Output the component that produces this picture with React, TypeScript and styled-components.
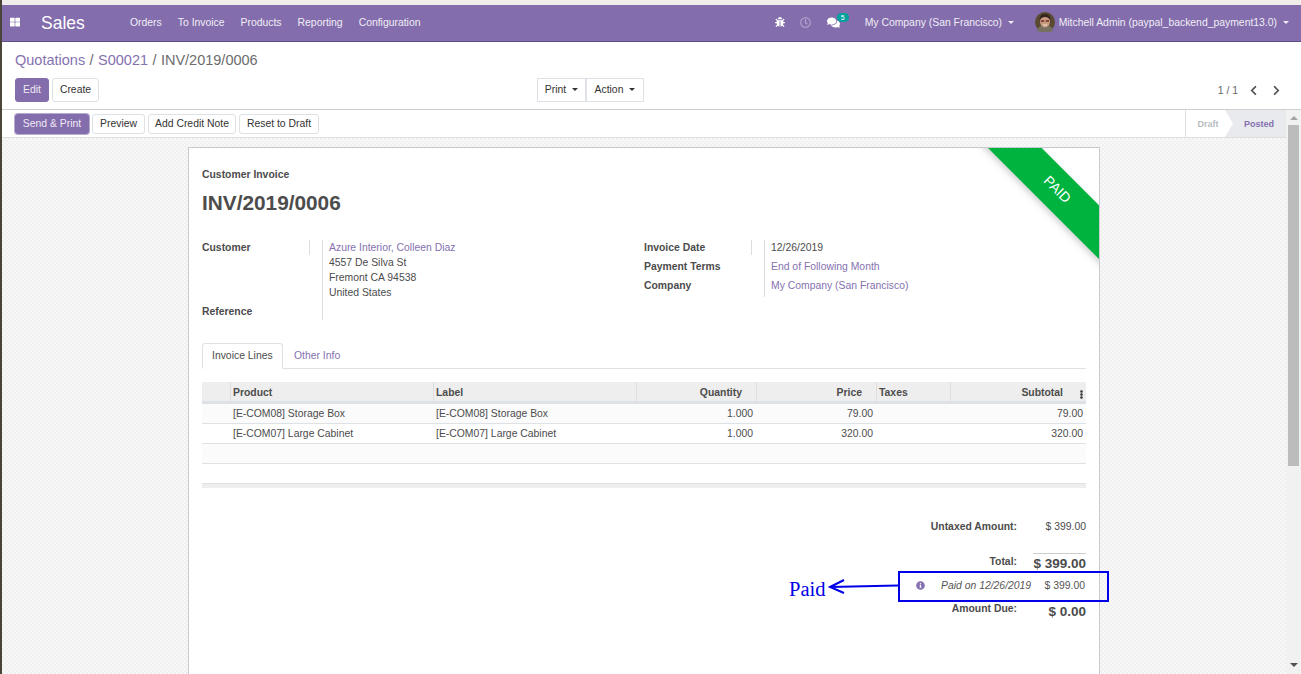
import React from 'react'
import styled, { createGlobalStyle } from 'styled-components'
import {
  FaBug,
  FaChevronLeft,
  FaChevronRight,
  FaComments,
  FaEllipsisV,
  FaInfoCircle,
  FaRegClock,
  FaThLarge,
} from 'react-icons/fa'

const GlobalStyle = createGlobalStyle`
  html, body {
    margin: 0;
    height: 100%;
    overflow: hidden;
  }
  body {
    font-family: "Liberation Sans", Arial, sans-serif;
    font-size: 10.4px;
    color: #4c4c4c;
  }
`

const PURPLE = '#836dac'
const LINK = '#8571b0'

const Page = styled.div`
  position: relative;
  width: 1301px;
  height: 674px;
  overflow: hidden;
  display: flex;
  flex-direction: column;
  background: #fff;
  border-left: 2px solid #4b4438;
  box-sizing: border-box;
`

const TopStrip = styled.div`
  height: 5px;
  flex: none;
  background: #efeeea;
`

const Navbar = styled.nav`
  height: 37px;
  flex: none;
  box-sizing: border-box;
  display: flex;
  align-items: center;
  background: ${PURPLE};
  border-bottom: 1px solid #5f4d88;
  color: #fff;
`

const AppsIcon = styled.span`
  display: flex;
  margin-left: 8px;
  margin-bottom: 2px;
  font-size: 10px;
`

const Brand = styled.span`
  margin-left: 21px;
  padding-top: 1px;
  font-size: 17.5px;
  width: 89px;
`

const Menu = styled.div`
  display: flex;
  gap: 16px;
  margin-bottom: 2px;
  color: #f1edf6;
`

const NavRight = styled.div`
  margin-left: auto;
  margin-bottom: 2px;
  display: flex;
  align-items: center;
  color: #f1edf6;
`

const NavIcon = styled.span<{ $dim?: boolean; $w: number }>`
  display: flex;
  align-items: center;
  position: relative;
  width: ${(p) => p.$w}px;
  font-size: 10px;
  color: ${(p) => (p.$dim ? '#b5a7cf' : '#fff')};
`

const Badge = styled.span`
  position: absolute;
  top: -3px;
  left: 10px;
  width: 12px;
  height: 9px;
  border-radius: 5px;
  background: #00a09d;
  color: #fff;
  font-size: 7px;
  line-height: 9px;
  text-align: center;
`

const Caret = styled.span`
  display: inline-block;
  margin-left: 6px;
  vertical-align: 2px;
  border-top: 3.5px solid currentColor;
  border-left: 3.5px solid transparent;
  border-right: 3.5px solid transparent;
`

const NavCompany = styled.span`
  width: 170px;
`

const Avatar = styled.svg`
  width: 20px;
  height: 20px;
  margin-right: 4px;
  flex: none;
`

const NavUser = styled.span`
  margin-right: 12px;
`

const ControlPanel = styled.div`
  height: 68px;
  flex: none;
  box-sizing: border-box;
  padding: 9px 19px 0 13px;
  border-bottom: 1px solid #cfcfcf;
`

const Breadcrumb = styled.div`
  font-size: 14.5px;
  line-height: 18px;
  word-spacing: 0.4px;
  color: #6c6c6c;
  a {
    color: ${LINK};
  }
`

const ControlRow = styled.div`
  display: grid;
  grid-template-columns: 522px 1fr auto;
  align-items: center;
  margin-top: 9px;
`

const ButtonGroup = styled.div<{ $gap?: number }>`
  display: flex;
  gap: ${(p) => p.$gap ?? 3}px;
`

const Button = styled.button<{ $primary?: boolean; $w: number; $h?: number; $join?: boolean }>`
  width: ${(p) => p.$w}px;
  height: ${(p) => p.$h ?? 24}px;
  padding: 0 0 1px;
  box-sizing: border-box;
  font-family: inherit;
  font-size: 10.4px;
  border-radius: ${(p) => (p.$join ? 0 : 3)}px;
  border: 1px solid ${(p) => (p.$primary ? PURPLE : '#dee2e6')};
  background: ${(p) => (p.$primary ? PURPLE : '#fff')};
  color: ${(p) => (p.$primary ? '#efeaf5' : '#333')};
`

const Pager = styled.div`
  display: flex;
  align-items: center;
  color: #666;
  svg {
    font-size: 11px;
    color: #555;
    margin-left: 10px;
  }
  svg + svg {
    margin-left: 12px;
  }
`

const Body = styled.div`
  flex: 1;
  min-height: 0;
  display: flex;
`

const Main = styled.div`
  flex: 1;
  min-width: 0;
  display: flex;
  flex-direction: column;
`

const StatusBar = styled.div`
  height: 28px;
  flex: none;
  box-sizing: border-box;
  display: flex;
  align-items: center;
  padding-left: 13px;
  background: #fff;
  border-bottom: 1px solid #dedede;
`

const SendButton = styled(Button)`
  box-shadow: 0 0 0 1px #b7abd0;
`

const StatusSteps = styled.div`
  margin-left: auto;
  display: flex;
  height: 100%;
  border-left: 1px solid #dee2e6;
  font-size: 9px;
  font-weight: 700;
`

const Step = styled.span<{ $active?: boolean; $w: number }>`
  width: ${(p) => p.$w}px;
  box-sizing: border-box;
  display: flex;
  align-items: center;
  justify-content: center;
  color: ${(p) => (p.$active ? LINK : '#b8bcc0')};
  background: ${(p) => (p.$active ? '#e8eaed' : '#fff')};
  padding-left: ${(p) => (p.$active ? 7 : 4)}px;
  ${(p) =>
    p.$active
      ? 'clip-path: polygon(0 0, 100% 0, 100% 100%, 0 100%, 8px 50%); margin-left: -1px;'
      : ''}
`

const Content = styled.div`
  flex: 1;
  min-height: 0;
  overflow: hidden;
  padding-top: 9px;
  background-color: #f4f4f4;
  background-image: conic-gradient(#f0f0f0 25%, #f8f8f8 0 50%, #f0f0f0 0 75%, #f8f8f8 0);
  background-size: 4px 4px;
`

const Scrollbar = styled.div`
  width: 15px;
  flex: none;
  display: flex;
  flex-direction: column;
  align-items: center;
  background: #f1f1f1;
`

const ScrollUp = styled.span`
  margin-top: 6px;
  border-bottom: 4px solid #a3a3a3;
  border-left: 4px solid transparent;
  border-right: 4px solid transparent;
`

const ScrollThumb = styled.span`
  width: 11px;
  height: 341px;
  margin-top: 5px;
  background: #bcbcbc;
`

const ScrollDown = styled.span`
  margin-top: auto;
  margin-bottom: 7px;
  border-top: 4px solid #505050;
  border-left: 4px solid transparent;
  border-right: 4px solid transparent;
`

const Sheet = styled.div`
  position: relative;
  width: 912px;
  height: 560px;
  margin: 0 auto;
  padding: 21px 13px 0;
  box-sizing: border-box;
  background: #fff;
  border: 1px solid #c9c9d1;
  overflow: hidden;
`

const Ribbon = styled.div`
  position: absolute;
  top: 23px;
  right: -58px;
  width: 200px;
  height: 37.5px;
  line-height: 37.5px;
  transform: rotate(45deg);
  background: #00b33f;
  box-shadow: 0 3px 6px rgba(0, 0, 0, 0.18);
  color: #fff;
  font-size: 14px;
  text-align: center;
`

const Kind = styled.div`
  font-weight: 700;
  line-height: 12px;
`

const Title = styled.h1`
  margin: 10px 0 0;
  font-size: 20.8px;
  line-height: 24px;
  font-weight: 700;
`

const Groups = styled.div`
  display: flex;
  margin-top: 25px;
  height: 80px;
`

const Group = styled.div<{ $w: number }>`
  width: ${(p) => p.$w}px;
  flex: none;
  display: grid;
  grid-template-columns: 108px 12px 1fr;
`

const CustomerGroup = styled(Group)`
  grid-template-rows: 64px 16px;
`

const InfoGroup = styled(Group)`
  grid-template-rows: 19px 19px 19px;
`

const Label = styled.div<{ $rule?: boolean }>`
  font-weight: 700;
  line-height: 15px;
  height: 15px;
  ${(p) => (p.$rule ? 'border-right: 1px solid #ddd;' : '')}
`

const Value = styled.div`
  border-left: 1px solid #ddd;
  padding-left: 6px;
  line-height: 15px;
`

const Link = styled.a`
  color: ${LINK};
`

const Tabs = styled.div`
  display: flex;
  margin-top: 23px;
  height: 25px;
  border-bottom: 1px solid #dee2e6;
`

const Tab = styled.div<{ $active?: boolean }>`
  height: 26px;
  line-height: ${(p) => (p.$active ? 23 : 25)}px;
  white-space: nowrap;
  padding: 0 ${(p) => (p.$active ? 9 : 10)}px;
  box-sizing: border-box;
  color: ${(p) => (p.$active ? '#4c4c4c' : LINK)};
  ${(p) =>
    p.$active
      ? 'width: 81px; background: #fff; border: 1px solid #dee2e6; border-bottom-color: #fff; border-radius: 3px 3px 0 0; margin-right: 1px;'
      : ''}
`

const Lines = styled.table`
  width: 884px;
  margin-top: 13px;
  border-collapse: separate;
  border-spacing: 0;
  table-layout: fixed;
  thead th {
    height: 18px;
    padding: 1px 3px 0 2px;
    background: #eee;
    border-left: 1px solid #dfdfdf;
    border-bottom: 3px solid #dee2e6;
    font-weight: 700;
    text-align: left;
    color: #4c4c4c;
  }
  thead th:first-child {
    border-left: 0;
  }
  tbody td {
    height: 19px;
    padding: 0 3px;
    border-bottom: 1px solid #dee2e6;
  }
  tbody tr:nth-child(odd) td {
    background: #fbfbfb;
  }
  tfoot td {
    height: 4px;
    padding: 0;
    background: #eee;
  }
`

const Num = styled.td`
  text-align: right;
`

const NumHead = styled.th`
  && {
    text-align: right;
    padding-right: 14px;
  }
`

const MenuHead = styled.th`
  && {
    position: relative;
    text-align: right;
    padding-right: 23px;
  }
  svg {
    position: absolute;
    right: 0;
    top: 8px;
    font-size: 9px;
    color: #333;
  }
`

const Totals = styled.div`
  margin: 31px 0 0 auto;
  width: 185px;
  display: grid;
  grid-template-columns: 132px 53px;
`

const TotalLabel = styled.div<{ $h: number; $top?: number }>`
  height: ${(p) => p.$h}px;
  box-sizing: border-box;
  padding: ${(p) => p.$top ?? 0}px 16px 0 0;
  text-align: right;
  font-weight: 700;
  line-height: 15px;
`

const TotalValue = styled.div<{ $h: number; $top?: number; $rule?: boolean; $strong?: boolean }>`
  height: ${(p) => p.$h}px;
  box-sizing: border-box;
  padding-top: ${(p) => p.$top ?? 0}px;
  text-align: right;
  white-space: nowrap;
  line-height: ${(p) => (p.$strong ? '18px' : '15px')};
  font-size: ${(p) => (p.$strong ? 13.5 : 10.4)}px;
  font-weight: ${(p) => (p.$strong ? 700 : 400)};
  border-top: ${(p) => (p.$rule ? '1px solid #ccc' : '0')};
`

const PaidLine = styled.div`
  grid-column: 1 / span 2;
  height: 25px;
  display: flex;
  align-items: center;
  color: #555;
`

const PaidIcon = styled.span`
  display: flex;
  color: ${LINK};
  font-size: 9px;
  margin-left: 15px;
`

const PaidOn = styled.em`
  margin-left: 16px;
`

const PaidAmount = styled.span`
  margin-left: auto;
  margin-right: 1px;
`

// the blue box, arrow and word were drawn over the screenshot
const CalloutBox = styled.div`
  position: absolute;
  left: 896px;
  top: 571px;
  width: 211px;
  height: 31px;
  box-sizing: border-box;
  border: 2px solid #0000e6;
`

const CalloutArrow = styled.svg`
  position: absolute;
  left: 824px;
  top: 578px;
  width: 72px;
  height: 20px;
`

const CalloutText = styled.span`
  position: absolute;
  left: 787px;
  top: 577px;
  font-family: "Liberation Serif", "Times New Roman", serif;
  font-size: 20.5px;
  line-height: 24px;
  color: #0000e6;
`

export default function App() {
  return (
    <>
      <GlobalStyle />
      <Page>
        <TopStrip />
        <Navbar>
          <AppsIcon>
            <FaThLarge />
          </AppsIcon>
          <Brand>Sales</Brand>
          <Menu>
            <span>Orders</span>
            <span>To Invoice</span>
            <span>Products</span>
            <span>Reporting</span>
            <span>Configuration</span>
          </Menu>
          <NavRight>
            <NavIcon $w={25}>
              <FaBug />
            </NavIcon>
            <NavIcon $w={27} $dim>
              <FaRegClock size={11} />
            </NavIcon>
            <NavIcon $w={38}>
              <FaComments size={13} />
              <Badge>5</Badge>
            </NavIcon>
            <NavCompany>
              My Company (San Francisco)
              <Caret />
            </NavCompany>
            <Avatar viewBox="0 0 20 20">
              <circle cx="10" cy="10" r="10" fill="#5a4a32" />
              <path d="M2 19c1-5 4-6 8-6s7 1 8 6l-4 1H6z" fill="#77705f" />
              <ellipse cx="10" cy="9.500" rx="5" ry="6" fill="#c99a80" />
              <path d="M4.500 8c0-5 3-6 5.500-6s5.500 1 5.500 6c-2-2-3-3-5.500-3s-3.500 1-5.500 3z" fill="#33261c" />
              <path d="M6 9h3.200M10.800 9H14" stroke="#6b2f28" strokeWidth="1.300" />
              <path d="M8 13h4" stroke="#f2e6dc" strokeWidth="1" />
            </Avatar>
            <NavUser>
              Mitchell Admin (paypal_backend_payment13.0)
              <Caret />
            </NavUser>
          </NavRight>
        </Navbar>
        <ControlPanel>
          <Breadcrumb>
            <Link>Quotations</Link> / <Link>S00021</Link> / INV/2019/0006
          </Breadcrumb>
          <ControlRow>
            <ButtonGroup>
              <Button $primary $w={34}>Edit</Button>
              <Button $w={47}>Create</Button>
            </ButtonGroup>
            <ButtonGroup $gap={0}>
              <Button $w={49} $join>Print<Caret /></Button>
              <Button $w={58} $join>Action<Caret /></Button>
            </ButtonGroup>
            <Pager>
              1 / 1
              <FaChevronLeft />
              <FaChevronRight />
            </Pager>
          </ControlRow>
        </ControlPanel>
        <Body>
          <Main>
            <StatusBar>
              <ButtonGroup>
                <SendButton $primary $w={74} $h={20}>Send &amp; Print</SendButton>
                <Button $w={53} $h={20}>Preview</Button>
                <Button $w={88} $h={20}>Add Credit Note</Button>
                <Button $w={80} $h={20}>Reset to Draft</Button>
              </ButtonGroup>
              <StatusSteps>
                <Step $w={40}>Draft</Step>
                <Step $active $w={61}>Posted</Step>
              </StatusSteps>
            </StatusBar>
            <Content>
              <Sheet>
                <Ribbon>PAID</Ribbon>
                <Kind>Customer Invoice</Kind>
                <Title>INV/2019/0006</Title>
                <Groups>
                  <CustomerGroup $w={442}>
                    <Label $rule>Customer</Label>
                    <span />
                    <Value>
                      <Link>Azure Interior, Colleen Diaz</Link>
                      <br />
                      4557 De Silva St
                      <br />
                      Fremont CA 94538
                      <br />
                      United States
                    </Value>
                    <Label>Reference</Label>
                    <span />
                    <Value />
                  </CustomerGroup>
                  <InfoGroup $w={440}>
                    <Label $rule>Invoice Date</Label>
                    <span />
                    <Value>12/26/2019</Value>
                    <Label>Payment Terms</Label>
                    <span />
                    <Value>
                      <Link>End of Following Month</Link>
                    </Value>
                    <Label>Company</Label>
                    <span />
                    <Value>
                      <Link>My Company (San Francisco)</Link>
                    </Value>
                  </InfoGroup>
                </Groups>
                <Tabs>
                  <Tab $active>Invoice Lines</Tab>
                  <Tab>Other Info</Tab>
                </Tabs>
                <Lines>
                  <colgroup>
                    <col width="28" />
                    <col width="203" />
                    <col width="203" />
                    <col width="120" />
                    <col width="120" />
                    <col width="74" />
                    <col width="136" />
                  </colgroup>
                  <thead>
                    <tr>
                      <th />
                      <th>Product</th>
                      <th>Label</th>
                      <NumHead>Quantity</NumHead>
                      <NumHead>Price</NumHead>
                      <th>Taxes</th>
                      <MenuHead>
                        Subtotal
                        <FaEllipsisV />
                      </MenuHead>
                    </tr>
                  </thead>
                  <tbody>
                    <tr>
                      <td />
                      <td>[E-COM08] Storage Box</td>
                      <td>[E-COM08] Storage Box</td>
                      <Num>1.000</Num>
                      <Num>79.00</Num>
                      <td />
                      <Num>79.00</Num>
                    </tr>
                    <tr>
                      <td />
                      <td>[E-COM07] Large Cabinet</td>
                      <td>[E-COM07] Large Cabinet</td>
                      <Num>1.000</Num>
                      <Num>320.00</Num>
                      <td />
                      <Num>320.00</Num>
                    </tr>
                    <tr>
                      <td colSpan={7} />
                    </tr>
                    <tr>
                      <td colSpan={7} />
                    </tr>
                  </tbody>
                  <tfoot>
                    <tr>
                      <td colSpan={7} />
                    </tr>
                  </tfoot>
                </Lines>
                <Totals>
                  <TotalLabel $h={34}>Untaxed Amount:</TotalLabel>
                  <TotalValue $h={34}>$ 399.00</TotalValue>
                  <TotalLabel $h={20} $top={1}>Total:</TotalLabel>
                  <TotalValue $h={20} $top={1} $rule $strong>$ 399.00</TotalValue>
                  <PaidLine>
                    <PaidIcon>
                      <FaInfoCircle />
                    </PaidIcon>
                    <PaidOn>Paid on 12/26/2019</PaidOn>
                    <PaidAmount>$ 399.00</PaidAmount>
                  </PaidLine>
                  <TotalLabel $h={24} $top={3}>Amount Due:</TotalLabel>
                  <TotalValue $h={24} $top={5} $strong>$ 0.00</TotalValue>
                </Totals>
              </Sheet>
            </Content>
          </Main>
          <Scrollbar>
            <ScrollUp />
            <ScrollThumb />
            <ScrollDown />
          </Scrollbar>
        </Body>
        <CalloutBox />
        <CalloutArrow viewBox="0 0 72 20">
          <path d="M72 7.500 L4 9 M18 2 L4 9 L18 15" fill="none" stroke="#0000e6" strokeWidth="2" />
        </CalloutArrow>
        <CalloutText>Paid</CalloutText>
      </Page>
    </>
  )
}
